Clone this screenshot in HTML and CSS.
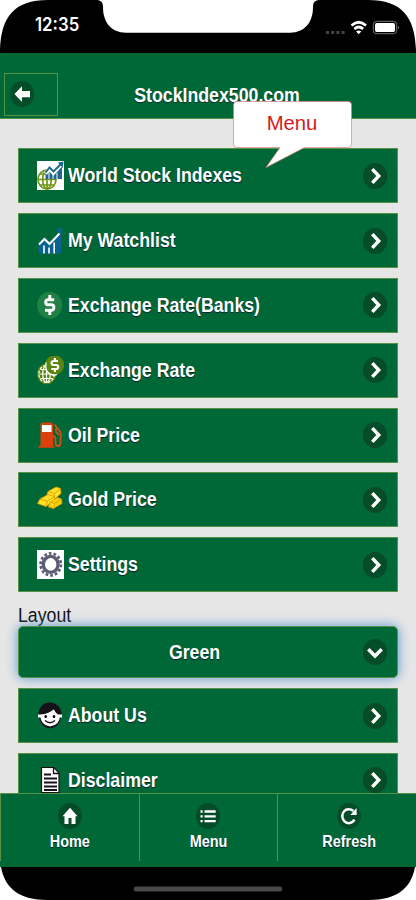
FILE: index.html
```html
<!DOCTYPE html>
<html lang="en">
<head>
<meta charset="utf-8">
<title>StockIndex500.com</title>
<link rel="stylesheet" href="styles.css">
</head>
<body>
<svg class="defs" width="0" height="0">
  <symbol id="go" viewBox="0 0 24 26" preserveAspectRatio="none"><ellipse cx="12" cy="13" rx="12.2" ry="13.1" fill="#054c29"/><path d="M9.3 6.1 15.700 13 9.3 19.9" fill="none" stroke="#fff" stroke-width="3.5"/></symbol>
</svg>
<div class="phone">
  <div class="status">
    <svg class="frame" viewBox="0 0 416 53"><path d="M0 53V50C1 17 14 0 48 0H96C101 0 103 2 103 7C103 22 111 32.7 126 32.7H290C305 32.7 313 22 313 7C313 2 315 0 320 0H368C402 0 415 17 416 50V53Z"/>
      <path d="M326 31h3v3h-3zM331.200 31h3v3h-3zM336.400 31h3v3h-3zM341.600 31h3v3h-3z" fill="#444"/>
      <g fill="none" stroke="#fff" stroke-width="2.700"><path d="M351.500 25.500Q358.700 19 366 25.500"/><path d="M354.300 28.900Q358.700 25.100 363.200 28.900"/></g><path d="M356.100 31.600Q358.700 29.600 361.300 31.600L358.700 34.200Z" fill="#fff"/>
      <rect x="373.300" y="21.300" width="23.400" height="12.400" rx="3.300" fill="none" stroke="#777"/><rect x="375" y="23" width="20" height="9" rx="1.700" fill="#fff"/><path d="M398 25.500Q400 27.500 398 29.600Z" fill="#777"/>
    </svg>
    <span class="time">12:35</span>
  </div>
  <header class="header">
    <a class="back"><svg width="24" height="26" viewBox="0 0 24 26"><ellipse cx="12" cy="13" rx="12" ry="13" fill="#054c29"/><path d="M4.500 13 12 5.200V10.100H20V16.200H12V21Z" fill="#fff"/></svg></a>
    <h1><span class="t">StockIndex500.com</span></h1>
  </header>
  <main class="content">
    <a class="row"><svg class="ico" viewBox="0 0 27 29"><path fill="#fff" d="M0 0h27v29H0z"/><g fill="none" stroke="#6f9518" stroke-width="1.700"><ellipse cx="10" cy="18.500" rx="9" ry="9.500"/><ellipse cx="10" cy="18.500" rx="4.300" ry="9.500"/><path d="M10 9v19M1 18.500h18M2.500 13h15M2.500 24h15"/></g><path d="M8.500 18V13l5-5 4 3.500L25 4v14Z" fill="#1c668f"/><path d="M12 18v-6M16 18v-5M20 18v-6" stroke="#fff"/><path d="M8.500 12.500l4-4.500 4 4L24 4" fill="none" stroke="#fff" stroke-width="4"/><path d="M8.500 11.500l4-5 4 4L24 3" fill="none" stroke="#1c668f" stroke-width="1.900"/><path d="M21 1.500 26.500.500 25.800 7Z" fill="#1c668f"/></svg><span class="t">World Stock Indexes</span><svg class="go"><use href="#go"/></svg></a>
    <a class="row"><svg class="ico" viewBox="0 0 27 29"><path d="M1.500 27.500V17L8 11.500l5 4L24 5v22.500Z" fill="#086391"/><path d="M18.500 4 25.500 1 25 9Z" fill="#086391"/><path d="M2 18.500 7.500 13l5 5L22.500 7.500" fill="none" stroke="#fff" stroke-width="2"/><path d="M7 27.500v-8M12 27.500v-6M17.200 27.500V16.500" stroke="#fff" stroke-width="1.600"/></svg><span class="t">My Watchlist</span><svg class="go"><use href="#go"/></svg></a>
    <a class="row"><svg class="ico" viewBox="0 0 27 29"><ellipse cx="12.600" cy="14.200" rx="12.500" ry="13.500" fill="#218043"/><path d="M17.200 8.700H11Q8.700 8.700 8.700 11.200T11 13.800h3.300Q16.900 13.800 16.900 16.500T14.300 19.200H8M12.800 4v4.500M12.800 19.500v4.500" fill="none" stroke="#fff" stroke-width="2.900"/></svg><span class="t">Exchange Rate(Banks)</span><svg class="go"><use href="#go"/></svg></a>
    <a class="row"><svg class="ico" viewBox="0 0 27 29"><ellipse cx="9.700" cy="17.800" rx="9.700" ry="10.400" fill="#5b8511"/><g fill="none" stroke="#fff" stroke-width="1.200"><ellipse cx="9.500" cy="18" rx="7.700" ry="8.500" stroke-dasharray="3 1.300"/><ellipse cx="9.500" cy="18" rx="3.800" ry="8.500"/><path d="M9.500 9.500v17M2 18h15M3.500 13.500h13M3.500 22.500h12"/></g><ellipse cx="17.600" cy="9.100" rx="9.500" ry="9.900" fill="#5b8511"/><path d="M9 6.500Q7.500 16 14 18.500Q18 19.500 20 18.500" fill="none" stroke="#fff" stroke-width="1.300"/><path d="M21 5h-4.200q-2.200 0-2.200 2t2.200 2H19q2.200 0 2.200 2T19 13h-4.700M17.900 2v3M17.900 13v3" fill="none" stroke="#fff" stroke-width="2.200"/></svg><span class="t">Exchange Rate</span><svg class="go"><use href="#go"/></svg></a>
    <a class="row"><svg class="ico" viewBox="0 0 27 29"><path d="M3.500 25V3.500Q3.500 1.500 5.500 1.500h8.500Q16 1.500 16 3.500V25h1.500v1.700H1.500V25Z" fill="#dd410b"/><path d="M5 4h9.500v7H5z" fill="#fff"/><path d="M15.500 15q3 0 3 3v4q0 3 2.500 3t2.500-3v-5q1.200-3 0-6L17.500 3.500M19 7v4l3.500 3" fill="none" stroke="#c95318" stroke-width="1.800"/></svg><span class="t">Oil Price</span><svg class="go"><use href="#go"/></svg></a>
    <a class="row"><svg class="ico" viewBox="0 0 27 29"><g stroke="#d99805" stroke-width=".8" fill="#ffe326"><path d="M9.500 11 11 6.500 19 2l4.500 1.500.5 5L17 14.500Z"/><path d="M11 6.500 17.500 8.500 17 14.500M17.500 8.500l6-5"/><path d="M.5 18.500 3 14 11 9.500l6.500 2v4L9 21.500Z"/><path d="M3 14l7 2.200L9 21.500M10 16.200 17.500 11.500"/><path d="M11.500 22l1.500-5 7.500-4.500 4 1.500.5 4.500-8.500 5Z" fill="#fbd000"/><path d="M13 17l4.500 1.500-1 5M17.500 18.500l7-4.500"/></g></svg><span class="t">Gold Price</span><svg class="go"><use href="#go"/></svg></a>
    <a class="row"><svg class="ico" viewBox="0 0 27 29"><path fill="#fff" d="M0 0h27v29H0z"/><g fill="none" stroke="#5b5e72"><ellipse cx="13.700" cy="14.400" rx="10.200" ry="11" stroke-width="2.600" stroke-dasharray="2.770 2" /><ellipse cx="13.700" cy="14.400" rx="7.400" ry="8" stroke-width="3.400"/></g></svg><span class="t">Settings</span><svg class="go"><use href="#go"/></svg></a>
    <div class="label"><span class="t">Layout</span></div>
    <div class="select"><span class="t">Green</span><svg class="go" viewBox="0 0 24 26"><ellipse cx="12" cy="13" rx="12.200" ry="13.100" fill="#054c29"/><path d="M5.300 10.300 12 17.100 18.700 10.300" fill="none" stroke="#fff" stroke-width="3.500"/></svg></div>
    <a class="row"><svg class="ico" viewBox="0 0 27 29"><ellipse cx="13" cy="14.500" rx="11" ry="12.800" fill="#161018"/><path d="M1 13.500h24v3H1z" fill="#fff"/><path d="M3 14q8-1 13.500-6.500 2 5 6.500 7.500-.5 9.500-10 10.500Q4 24.500 3 14Z" fill="#fff"/><ellipse cx="8.700" cy="15.500" rx="1.300" ry="1.500"/><ellipse cx="17" cy="15.500" rx="1.300" ry="1.500"/><path d="M8 19.500q5 4.500 10 0" fill="none" stroke="#161018" stroke-width="1.400"/><path d="M1.200 13Q3 1 13 1.500T24.800 13H22L18 7.500Q12 13 2 13Z" fill="#161018"/></svg><span class="t">About Us</span><svg class="go"><use href="#go"/></svg></a>
    <a class="row"><svg class="ico" viewBox="0 0 27 29"><path d="M4.500 1.500H17L22 7v19.500H4.500Z" fill="#fff" stroke="#161018" stroke-width="1.200"/><path d="M16.500 1.500V7.500H22" fill="none" stroke="#161018" stroke-width="1.300"/><path d="M7 8.500h7M7 12.500h13M7 16.500h13M7 20.500h13M7 24h13" stroke="#161018" stroke-width="1.900"/></svg><span class="t">Disclaimer</span><svg class="go"><use href="#go"/></svg></a>
  </main>
  <nav class="tabs">
    <a class="tab"><svg viewBox="0 0 24 26"><ellipse cx="12" cy="13" rx="12" ry="13" fill="#054c29"/><path d="M4.500 13.200 12 4.700l7.500 8.500h-2V21h-4v-6h-3v6h-4v-7.800Z" fill="#fff"/></svg><span class="t">Home</span></a>
    <a class="tab"><svg viewBox="0 0 24 26"><ellipse cx="12" cy="13" rx="12" ry="13" fill="#054c29"/><path d="M4.500 8.500h2.200M4.500 13.300h2.200M4.500 18.100h2.200M8.500 8.500h11.200M8.500 13.300h11.200M8.500 18.100h11.200" stroke="#fff" stroke-width="2.300"/></svg><span class="t">Menu</span></a>
    <a class="tab"><svg viewBox="0 0 24 26"><ellipse cx="12" cy="13" rx="12" ry="13" fill="#054c29"/><path d="M16.500 8Q14.500 6.300 11.500 6.300C8 6.300 5.300 9.200 5.300 13s2.700 7.200 6.500 7.200q3.700 0 5.700-3.500" fill="none" stroke="#fff" stroke-width="2.500"/><path d="M19.600 5v7h-6.300Z" fill="#fff"/></svg><span class="t">Refresh</span></a>
  </nav>
  <div class="bottom"><svg viewBox="0 0 416 33"><path d="M1 0H415C411 22 396 33 369 33H47C20 33 5 22 1 0Z"/><rect x="133.700" y="19.500" width="148.500" height="5" rx="2.500" fill="#484848"/></svg></div>
  <div class="tip"><svg viewBox="0 0 120 68"><path d="M4 .5H115Q118.500.500 118.500 4V43Q118.500 46.500 115 46.500H71.500L33 66.500 47 46.500H4Q.5 46.500.5 43V4Q.5.500 4 .5Z" fill="#fff" stroke="#d98282" stroke-width=".7"/></svg><span>Menu</span></div>
</div>
</body>
</html>
```
FILE: styles.css
```css
* { box-sizing: border-box; }
body { margin: 0; background: #fff; font-family: "Liberation Sans", Arial, sans-serif; font-size: 19.3px; overflow: hidden; }
.defs { position: absolute; }
.phone { position: relative; width: 416px; height: 900px; display: flex; flex-direction: column; overflow: hidden; }
svg { display: block; flex: none; }
.t { display: inline-block; transform: scaleX(.919); white-space: nowrap; }
.status { height: 52.7px; flex: none; position: relative; }
.frame { width: 416px; height: 53px; }
.time { position: absolute; left: 35px; top: 14px; color: #fff; font: 600 18px/22px Inter, sans-serif; transform: scaleX(.935); transform-origin: left; }
.header { position: relative; z-index: 1; flex: none; height: 66.6px; background: #006837; border-bottom: 1px solid #579344; display: grid; grid-template-columns: 62px 1fr 43px; padding-top: 20px; }
.back { width: 54.500px; height: 43px; margin-left: 3.500px; border: 1px solid #579344; display: flex; align-items: center; padding-left: 5.500px; }
.header h1 { margin: 0; padding-top: 12px; font-size: 19.3px; line-height: 22px; color: #fff; text-align: center; text-shadow: 0 1px 1px #033; }
.content { flex: 1; min-height: 0; overflow: hidden; background: #e6e6e6; padding: 29px 18px 0; }
.row { display: flex; align-items: center; height: 55px; margin-bottom: 9.830px; background: #006837; border: 1px solid #579344; color: #fff; font-weight: bold; line-height: 22px; padding: 0 10px 0 18px; text-shadow: 0 1px 1px #023; }
.ico { width: 27px; height: 29px; margin-right: 4.300px; }
.row .t { transform-origin: left; padding-top: 1px; }
.go { width: 24px; height: 26px; margin-left: auto; }
.label { height: 23.900px; padding-top: 2.500px; line-height: 22px; color: #111; }
.label .t { transform-origin: left; }
.select { position: relative; height: 52.400px; margin-bottom: 9.800px; display: flex; align-items: center; background: #006837; border: 1px solid #579344; border-radius: 5px; box-shadow: 0 0 12px #5596d1; color: #fff; font-weight: bold; text-shadow: 0 1px 1px #023; padding: 0 10px 0 7px; }
.select .t { flex: 1; text-align: center; transform-origin: center; padding-top: 2px; }
.tabs { flex: none; height: 74.300px; display: grid; grid-template-columns: 139.500px 138.500px 1fr; background: #006837; border-top: 1px solid #579344; }
.tab { height: 67px; border-right: 1px solid #579344; display: flex; flex-direction: column; align-items: center; padding-top: 9px; color: #fff; font-weight: bold; font-size: 15.700px; line-height: 18px; text-shadow: 0 1px 1px #023; }
.tab:first-child { border-left: 1px solid #579344; }
.tab:last-child { border-right: 0; padding-left: 4px; }
.tab svg { width: 24px; height: 26px; margin-bottom: 4px; }
.bottom { flex: none; height: 32.700px; }
.bottom svg { width: 416px; height: 33px; }
.tip { position: absolute; z-index: 2; left: 233px; top: 100.500px; width: 120px; height: 68px; }
.tip svg { width: 120px; height: 68px; }
.tip span { position: absolute; left: 0; top: 11px; width: 118px; text-align: center; color: #d51820; font-size: 20.300px; line-height: 23px; }
```
